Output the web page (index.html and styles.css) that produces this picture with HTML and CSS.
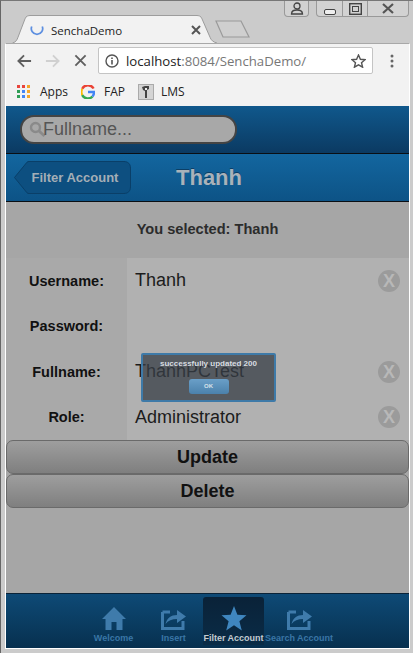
FILE: index.html
```html
<!DOCTYPE html>
<html lang="en">

<head>
    <meta charset="UTF-8">
    <meta name="viewport" content="width=device-width, initial-scale=1.0">
    <title>SenchaDemo</title>
    <link rel="stylesheet" href="styles.css">
</head>

<body>
    <div class="window">
        <div class="titlebar">
            <div class="tab-strip">
                <div class="tab">
                    <svg class="tab-shape" width="206" height="28" viewBox="0 0 206 29" preserveAspectRatio="none">
                        <path d="M0.5 29 C4 28 5 26 6 23 L13 4 C14 1 16 0.5 19 0.5 L184 0.5 C187 0.5 189 1 190 4 L198 23 C199 26 201 28 205 29" fill="#f2f2f2" stroke="#9a9a9a" />
                    </svg>
                    <svg class="spinner" width="14" height="14" viewBox="0 0 16 16">
                        <path d="M2 4 A6.5 6.5 0 1 0 14 4" fill="none" stroke="#5d8fe0" stroke-width="2" />
                    </svg>
                    <span class="tab-title">SenchaDemo</span>
                    <svg class="tab-close" width="10" height="10" viewBox="0 0 10 10">
                        <path d="M1 1 L9 9 M9 1 L1 9" stroke="#555" stroke-width="2" />
                    </svg>
                </div>
                <svg class="new-tab" width="36" height="18" viewBox="0 0 36 18">
                    <path d="M1 1 L26 1 L34 17 L8 17 Z" fill="#cfcfcf" stroke="#9a9a9a" stroke-width="1.2" />
                </svg>
            </div>
            <div class="caption">
                <div class="caption-group user-btn">
                    <svg width="14" height="13" viewBox="0 0 14 13">
                        <circle cx="7" cy="4" r="3" fill="none" stroke="#444" stroke-width="1.3" />
                        <path d="M1.5 12 C1.5 8.5 4 8 7 8 C10 8 12.5 8.500 12.5 12 Z" fill="none" stroke="#444" stroke-width="1.3" />
                    </svg>
                </div>
                <div class="caption-group">
                    <div class="caption-btn min-btn">
                        <svg width="12" height="6" viewBox="0 0 12 6">
                            <rect x="0.5" y="0.5" width="11" height="5" rx="1.500" fill="#eee" stroke="#444" />
                        </svg>
                    </div>
                    <div class="caption-btn max-btn">
                        <svg width="13" height="12" viewBox="0 0 13 12">
                            <rect x="0.700" y="0.700" width="11.600" height="10.600" fill="none" stroke="#444" stroke-width="1.4" />
                            <rect x="3.500" y="3.500" width="6" height="5" fill="none" stroke="#444" />
                        </svg>
                    </div>
                    <div class="caption-btn close-btn">
                        <svg width="12" height="11" viewBox="0 0 12 11">
                            <path d="M1 1 L11 10 M11 1 L1 10" stroke="#555" stroke-width="2.200" />
                        </svg>
                    </div>
                </div>
            </div>
        </div>

        <div class="viewport">
            <div class="toolbar">
                <svg class="nav-icon" width="15" height="14" viewBox="0 0 16 14">
                    <path d="M15 7 L2 7 M7.500 1 L1.500 7 L7.500 13" fill="none" stroke="#5f5f5f" stroke-width="2" />
                </svg>
                <svg class="nav-icon" width="15" height="14" viewBox="0 0 16 14">
                    <path d="M1 7 L14 7 M8.500 1 L14.500 7 L8.500 13" fill="none" stroke="#d0d0d0" stroke-width="2" />
                </svg>
                <svg class="nav-icon" width="13" height="13" viewBox="0 0 14 14">
                    <path d="M1.500 1.500 L12.500 12.500 M12.500 1.500 L1.500 12.500" stroke="#5f5f5f" stroke-width="2" />
                </svg>
                <div class="omnibox">
                    <svg width="14" height="14" viewBox="0 0 14 14">
                        <circle cx="7" cy="7" r="6" fill="none" stroke="#555" stroke-width="1.400" />
                        <path d="M7 6 L7 10.500 M7 3.500 L7 5" stroke="#555" stroke-width="1.600" />
                    </svg>
                    <span class="url"><span class="url-host">localhost</span>:8084/SenchaDemo/</span>
                    <svg class="star" width="15" height="14" viewBox="0 0 15 14">
                        <path d="M7.500 1 L9.400 5.300 L14 5.700 L10.500 8.700 L11.600 13.200 L7.500 10.800 L3.400 13.200 L4.500 8.700 L1 5.700 L5.600 5.300 Z" fill="none" stroke="#555" stroke-width="1.400" />
                    </svg>
                </div>
                <svg class="menu-dots" width="4" height="14" viewBox="0 0 4 14">
                    <circle cx="2" cy="2" r="1.500" fill="#666" />
                    <circle cx="2" cy="7" r="1.500" fill="#666" />
                    <circle cx="2" cy="12" r="1.500" fill="#666" />
                </svg>
            </div>

            <div class="bookmarks">
                <div class="bookmark">
                    <svg width="14" height="14" viewBox="0 0 14 14">
                        <rect x="0" y="0" width="3" height="3" fill="#e8453c" />
                        <rect x="5" y="0" width="3" height="3" fill="#e8453c" />
                        <rect x="10" y="0" width="3" height="3" fill="#f4a62a" />
                        <rect x="0" y="5" width="3" height="3" fill="#2f9e55" />
                        <rect x="5" y="5" width="3" height="3" fill="#4285f4" />
                        <rect x="10" y="5" width="3" height="3" fill="#f4a62a" />
                        <rect x="0" y="10" width="3" height="3" fill="#2f9e55" />
                        <rect x="5" y="10" width="3" height="3" fill="#4285f4" />
                        <rect x="10" y="10" width="3" height="3" fill="#f4a62a" />
                    </svg>
                    <span>Apps</span>
                </div>
                <div class="bookmark">
                    <svg width="14" height="14" viewBox="0 0 14 14">
                        <path d="M12.600 3.500 A6.500 6.500 0 0 0 1.200 3.800" fill="none" stroke="#ea4335" stroke-width="2.400" />
                        <path d="M1.200 3.800 A6.500 6.500 0 0 0 1.200 10.200" fill="none" stroke="#fbbc05" stroke-width="2.400" />
                        <path d="M1.200 10.200 A6.500 6.500 0 0 0 11.500 11.500" fill="none" stroke="#34a853" stroke-width="2.400" />
                        <path d="M11.500 11.500 A6.500 6.500 0 0 0 13 7 L7 7" fill="none" stroke="#4285f4" stroke-width="2.400" />
                    </svg>
                    <span>FAP</span>
                </div>
                <div class="bookmark bookmark-lms">
                    <svg width="16" height="16" viewBox="0 0 16 16">
                        <rect x="0.500" y="0.500" width="15" height="15" fill="#d4d4d4" stroke="#aaa" />
                        <path d="M4 3 L7 2 L11 2 L11 5 L9 6 L9 14 L7 14 L7 7 L5 6 Z" fill="#444" />
                        <path d="M7 4 L9 4 L9 6 L7 6 Z" fill="#eee" />
                    </svg>
                    <span>LMS</span>
                </div>
            </div>

            <div class="app">
                <div class="search-bar">
                    <div class="search-field">
                        <svg class="search-icon" width="17" height="17" viewBox="0 0 17 17">
                            <circle cx="6.500" cy="6.500" r="4.500" fill="none" stroke="#8a8a8a" stroke-width="2.400" />
                            <path d="M10 10 L15.500 15" stroke="#8a8a8a" stroke-width="2.800" />
                        </svg>
                        <span>Fullname...</span>
                    </div>
                </div>

                <div class="title-bar">
                    <div class="back-btn">
                        <svg class="back-shape" width="117" height="33" viewBox="0 0 117 33">
                            <path d="M0.500 16.500 L13 1.200 C13.500 0.700 14 0.500 15 0.500 L110 0.500 C114 0.500 116.500 3 116.500 7 L116.500 26 C116.500 30 114 32.500 110 32.500 L15 32.500 C14 32.500 13.500 32.300 13 31.800 Z" fill="#0d4f80" stroke="#0a3f68" />
                        </svg>
                        <span>Filter Account</span>
                    </div>
                    <h1 class="page-title">Thanh</h1>
                </div>

                <div class="content">
                    <p class="selected">You selected: Thanh</p>

                    <div class="form">
                        <div class="form-row">
                            <label class="form-label">Username:</label>
                            <div class="form-value">
                                <span>Thanh</span>
                                <div class="clear-btn">X</div>
                            </div>
                        </div>
                        <div class="form-row">
                            <label class="form-label">Password:</label>
                            <div class="form-value"></div>
                        </div>
                        <div class="form-row">
                            <label class="form-label">Fullname:</label>
                            <div class="form-value">
                                <span>ThanhPCTest</span>
                                <div class="clear-btn">X</div>
                            </div>
                        </div>
                        <div class="form-row">
                            <label class="form-label">Role:</label>
                            <div class="form-value">
                                <span>Administrator</span>
                                <div class="clear-btn">X</div>
                            </div>
                        </div>
                    </div>

                    <button class="action-btn">Update</button>
                    <button class="action-btn">Delete</button>

                    <div class="msgbox">
                        <div class="msgbox-text">successfully updated 200</div>
                        <div class="msgbox-ok">OK</div>
                    </div>
                </div>

                <div class="tabbar">
                    <div class="tabbar-item item-welcome">
                        <svg width="26" height="25" viewBox="0 0 26 25">
                            <path d="M13 1 L25 13 L21.500 13 L21.500 24 L15.500 24 L15.500 16 L10.500 16 L10.500 24 L4.500 24 L4.500 13 L1 13 Z" fill="#3f7bab" />
                        </svg>
                        <span>Welcome</span>
                    </div>
                    <div class="tabbar-item item-insert">
                        <svg width="25" height="22" viewBox="0 0 25 22">
                            <path d="M1.500 4 L9 4 M1.500 4 L1.500 20.500 L22 20.500 L22 13" fill="none" stroke="#3f7bab" stroke-width="3" />
                            <path d="M4.500 16 C6 10 10 7 16 7 L16 2 L25 8.500 L16 15 L16 11 C11 11 7 12.500 4.500 16 Z" fill="#3f7bab" />
                        </svg>
                        <span>Insert</span>
                    </div>
                    <div class="tabbar-item item-filter active">
                        <svg width="26" height="25" viewBox="0 0 26 25">
                            <path d="M13 0 L16.400 8.800 L25.500 9.300 L18.400 15.200 L20.800 24.500 L13 19.300 L5.200 24.500 L7.600 15.200 L0.500 9.300 L9.600 8.800 Z" fill="#3f86bf" />
                        </svg>
                        <span>Filter Account</span>
                    </div>
                    <div class="tabbar-item item-search">
                        <svg width="25" height="22" viewBox="0 0 25 22">
                            <path d="M1.500 4 L9 4 M1.500 4 L1.500 20.500 L22 20.500 L22 13" fill="none" stroke="#3f7bab" stroke-width="3" />
                            <path d="M4.500 16 C6 10 10 7 16 7 L16 2 L25 8.500 L16 15 L16 11 C11 11 7 12.500 4.500 16 Z" fill="#3f7bab" />
                        </svg>
                        <span>Search Account</span>
                    </div>
                </div>
            </div>
        </div>
    </div>
</body>

</html>
```

FILE: styles.css
```css
html, body {
    margin: 0;
    padding: 0;
}

body {
    width: 413px;
    height: 653px;
    overflow: hidden;
    background-color: #cbcbcb;
    font-family: "Liberation Sans", Arial, sans-serif;
}

.window {
    height: 653px;
    box-sizing: border-box;
    padding: 0 3px 4px 4px;
    border-left: 1px solid #666;
    border-top: 1px solid #777;
    display: flex;
    flex-direction: column;
}

/* browser chrome */
.titlebar {
    height: 42px;
    display: flex;
    justify-content: space-between;
    flex-shrink: 0;
}

.tab-strip {
    display: flex;
    align-items: flex-end;
    padding-left: 7px;
}

.tab {
    position: relative;
    width: 206px;
    height: 28px;
    display: flex;
    align-items: center;
    padding: 2px 0 0 18px;
    box-sizing: border-box;
}

.tab-shape {
    position: absolute;
    left: 0;
    top: 0;
}

.spinner {
    position: relative;
    margin-right: 7px;
}

.tab-title {
    position: relative;
    font-family: "Open Sans", sans-serif;
    font-size: 11.500px;
    color: #222;
    width: 140px;
}

.tab-close {
    position: relative;
}

.new-tab {
    margin-left: -3px;
    margin-bottom: 5px;
}

.caption {
    display: flex;
    align-items: flex-start;
    gap: 7px;
    margin-right: 1px;
}

.caption-group {
    display: flex;
    height: 15px;
    border: 1px solid #999;
    border-top: none;
    border-radius: 0 0 4px 4px;
    background-color: #d2d2d2;
}

.user-btn {
    width: 23px;
    justify-content: center;
    align-items: center;
}

.caption-btn {
    display: flex;
    align-items: center;
    justify-content: center;
    border-left: 1px solid #999;
}

.min-btn {
    width: 25px;
    border-left: none;
    align-items: flex-end;
    padding-bottom: 1px;
    box-sizing: border-box;
}

.max-btn {
    width: 24px;
}

.close-btn {
    width: 40px;
}

.viewport {
    flex: 1;
    display: flex;
    flex-direction: column;
    background-color: #f2f2f2;
    border: 1px solid #a8a8a8;
    border-bottom: 1px solid #fff;
    border-right-color: #fff;
    border-left-color: #fff;
    min-height: 0;
}

.toolbar {
    height: 33px;
    display: flex;
    align-items: center;
    padding-left: 11px;
    flex-shrink: 0;
}

.nav-icon {
    margin-right: 13px;
}

.nav-icon:nth-child(2) {
    margin-right: 14px;
}

.nav-icon:nth-child(3) {
    margin-right: 11px;
}

.omnibox {
    width: 275px;
    height: 27px;
    box-sizing: border-box;
    background-color: #fff;
    border: 1px solid #c4c4c4;
    border-radius: 2px;
    display: flex;
    align-items: center;
    padding: 0 6px;
}

.url {
    font-family: "Open Sans", sans-serif;
    font-size: 13.200px;
    color: #777;
    margin-left: 7px;
    flex: 1;
}

.url-host {
    color: #222;
}

.menu-dots {
    margin-left: 17px;
}

.bookmarks {
    height: 29px;
    display: flex;
    align-items: center;
    padding-left: 11px;
    gap: 13px;
    flex-shrink: 0;
    font-family: "Open Sans", sans-serif;
    font-size: 12px;
    color: #222;
}

.bookmark {
    display: flex;
    align-items: center;
    gap: 9px;
}

.bookmark-lms {
    gap: 7px;
}

/* sencha app */
.app {
    flex: 1;
    display: flex;
    flex-direction: column;
    min-height: 0;
    background-color: #a6a6a6;
}

.search-bar {
    height: 48px;
    flex-shrink: 0;
    box-sizing: border-box;
    display: flex;
    align-items: center;
    padding-left: 14px;
    border-bottom: 1px solid #0a0f14;
    background: linear-gradient(#10588c, #0b3a62);
}

.search-field {
    width: 217px;
    height: 29px;
    box-sizing: border-box;
    display: flex;
    align-items: center;
    padding-left: 7px;
    background-color: #a8a8a8;
    border: 2px solid #444;
    border-radius: 14px;
    font-size: 18px;
    color: #555;
}

.search-icon {
    margin-right: -3px;
}

.title-bar {
    height: 48px;
    flex-shrink: 0;
    box-sizing: border-box;
    position: relative;
    display: flex;
    align-items: center;
    padding-left: 8px;
    border-bottom: 1px solid #0a0f14;
    background: linear-gradient(#13669f, #0d5386);
}

.back-btn {
    position: relative;
    width: 117px;
    height: 33px;
    display: flex;
    align-items: center;
    justify-content: center;
    padding-left: 5px;
    box-sizing: border-box;
    font-size: 13px;
    font-weight: bold;
    color: #a4aeb6;
}

.back-shape {
    position: absolute;
    left: 0;
    top: 0;
}

.back-btn span {
    position: relative;
}

.page-title {
    margin: 0 0 0 45px;
    font-size: 22px;
    font-weight: bold;
    color: #a9b2ba;
    text-shadow: 0 -1px 0 #0c3f66;
}

.content {
    position: relative;
    flex: 1;
    min-height: 0;
    background-color: #a6a6a6;
}

.selected {
    margin: 0;
    height: 56px;
    line-height: 54px;
    text-align: center;
    font-size: 14.600px;
    font-weight: bold;
    color: #2c2c2c;
}

.form-row {
    display: flex;
    height: 45.500px;
}

.form-label {
    width: 121px;
    flex-shrink: 0;
    display: flex;
    align-items: center;
    justify-content: center;
    background-color: #a9a9a9;
    font-size: 14.500px;
    font-weight: bold;
    color: #111;
}

.form-value {
    flex: 1;
    display: flex;
    align-items: center;
    justify-content: space-between;
    padding: 0 9px 0 8px;
    background-color: #b1b1b1;
    font-size: 18px;
    color: #1c1c1c;
}

.clear-btn {
    width: 22px;
    height: 22px;
    border-radius: 50%;
    background-color: #9b9b9b;
    color: #b8b8b8;
    font-size: 18px;
    font-weight: bold;
    line-height: 22px;
    text-align: center;
}

.action-btn {
    display: block;
    width: 403px;
    height: 34px;
    margin: 0;
    padding: 0;
    border: 1px solid #6a6a6a;
    border-radius: 7px;
    background: linear-gradient(#9e9e9e, #7f7f7f);
    font-family: inherit;
    font-size: 18px;
    font-weight: bold;
    color: #111;
}

.msgbox {
    position: absolute;
    left: 135px;
    top: 151px;
    width: 135px;
    height: 49px;
    box-sizing: border-box;
    border: 2px solid #3e7aa8;
    border-radius: 2px;
    background-color: rgba(55, 62, 70, 0.75);
    text-align: center;
}

.msgbox-text {
    font-size: 8px;
    font-weight: bold;
    color: #d8dde0;
    margin-top: 3px;
    line-height: 12px;
}

.msgbox-ok {
    width: 40px;
    height: 15px;
    margin: 9px auto 0;
    border-radius: 3px;
    background: linear-gradient(#6a9fc8, #4b81ab);
    font-size: 6px;
    font-weight: bold;
    line-height: 15px;
    color: #d6e2ea;
}

.tabbar {
    height: 55px;
    flex-shrink: 0;
    box-sizing: border-box;
    display: flex;
    padding: 3px 0 0 87px;
    border-top: 1px solid #0a2338;
    background: linear-gradient(#0e4a76, #07304f);
}

.tabbar-item {
    display: flex;
    flex-direction: column;
    align-items: center;
    justify-content: space-between;
    height: 48px;
    padding: 9px 0 2px;
    box-sizing: border-box;
    font-size: 9px;
    font-weight: bold;
    color: #3a76a6;
    white-space: nowrap;
}

.item-welcome {
    width: 41px;
}

.item-insert {
    width: 25px;
    margin-left: 27px;
}

.item-filter {
    width: 61px;
    margin-left: 17px;
}

.item-search {
    width: 68px;
    margin-left: 1px;
}

.item-insert svg, .item-search svg {
    margin-top: 2px;
}

.active {
    border-radius: 3px 3px 0 0;
    background: linear-gradient(#0a2238, #0a2c47);
    color: #c4ccd2;
}
```
